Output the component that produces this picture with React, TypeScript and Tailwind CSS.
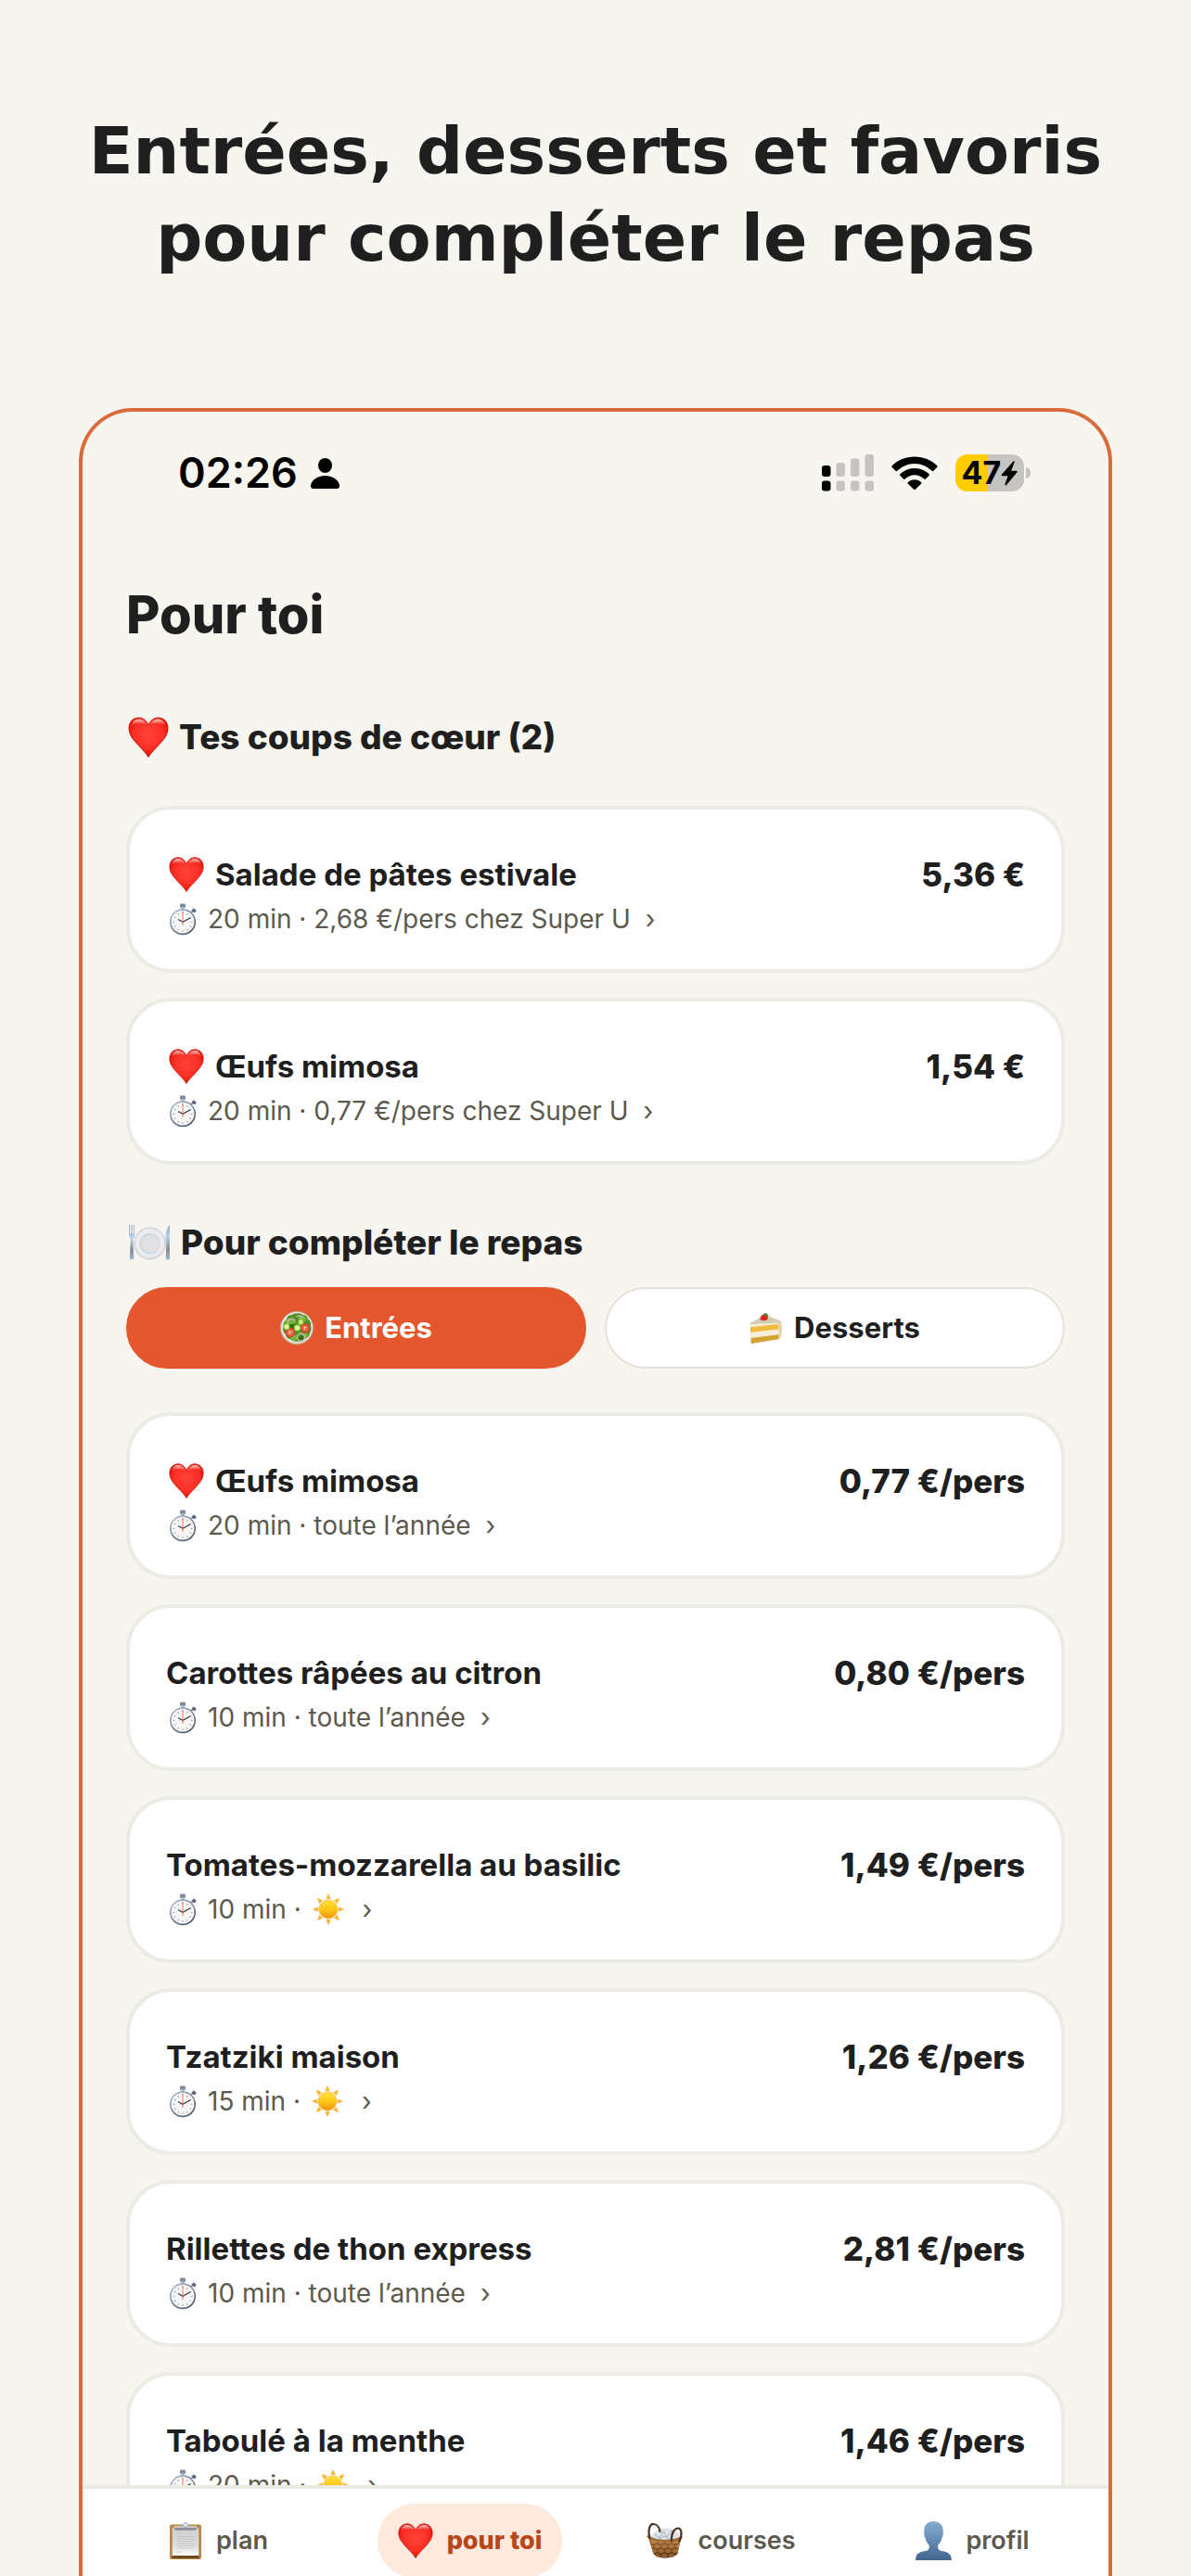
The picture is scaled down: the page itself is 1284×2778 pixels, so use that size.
import { useState } from "react";
import type { ReactNode } from "react";

type IconProps = { className?: string };

function Heart({ className = "" }: IconProps) {
  return (
    <svg viewBox="0 0 44 44" className={className} aria-hidden="true">
      <defs>
        <radialGradient id="heart-body" cx="0.5" cy="0.42" r="0.62">
          <stop offset="0" stopColor="#ff4338" />
          <stop offset="0.6" stopColor="#fb2f26" />
          <stop offset="0.88" stopColor="#dd1409" />
          <stop offset="1" stopColor="#b30a02" />
        </radialGradient>
        <linearGradient id="heart-shine" x1="0" y1="0" x2="0" y2="1">
          <stop offset="0" stopColor="#fff" stopOpacity="0.75" />
          <stop offset="1" stopColor="#ff8a80" stopOpacity="0" />
        </linearGradient>
      </defs>
      <path d="M22 43.500C20 39.500 15.500 35.500 11 30.500 5.500 24.500 1 19.500 1 12.200 1 5.500 5.600 1 11.500 1 16 1 20 4 22 9 24 4 28 1 32.500 1 38.400 1 43 5.500 43 12.200c0 7.300-4.500 12.300-10 18.300C28.500 35.500 24 39.500 22 43.500Z" fill="url(#heart-body)" stroke="#d3180d" strokeWidth="1" />
      <path d="M3 10.500C4 5.300 7.300 2.400 11.500 2.400c4 0 7.300 2.400 8.800 6.400C17 6.300 7 5.500 3 10.500Z" fill="url(#heart-shine)" />
      <path d="M41 10.500c-1-5.200-4.300-8.100-8.500-8.100-4 0-7.300 2.400-8.800 6.400C27 6.300 37 5.500 41 10.500Z" fill="url(#heart-shine)" />
    </svg>
  );
}

function Stopwatch({ className = "" }: IconProps) {
  const ticks = Array.from({ length: 12 }, (_, i) => i * 30);
  return (
    <svg viewBox="0 0 30 35" className={className} aria-hidden="true">
      <defs>
        <linearGradient id="watch-rim" x1="0" y1="0" x2="1" y2="1">
          <stop offset="0" stopColor="#a9bcd6" />
          <stop offset="0.5" stopColor="#6e7d95" />
          <stop offset="1" stopColor="#3d4554" />
        </linearGradient>
      </defs>
      <rect x="12" y="0.500" width="6" height="4.500" rx="1.200" fill="#7f8b9d" />
      <rect x="13.300" y="4" width="3.400" height="3" fill="#a9b6c8" />
      <path d="m24.300 9.800 2.200-2.200" stroke="#8794a8" strokeWidth="2" />
      <rect x="25" y="6" width="4.200" height="3.600" rx="1" transform="rotate(35 27 8)" fill="#5d6980" />
      <circle cx="15" cy="20.300" r="14" fill="url(#watch-rim)" />
      <circle cx="15" cy="20" r="12.600" fill="#d9dee6" />
      <circle cx="15" cy="20.300" r="12" fill="#f7f7f7" />
      {ticks.map((angle) => (
        <path key={angle} d="M15 9.800v1.700" stroke="#8a8a8a" strokeWidth="0.900" transform={`rotate(${angle} 15 20.300)`} />
      ))}
      <path d="M15 24V8.800" stroke="#f2785c" strokeWidth="1" />
      <path d="M10 17.500 15 20.300l8.300-4.600" stroke="#333a47" strokeWidth="1.200" fill="none" />
      <circle cx="15" cy="20.300" r="1.100" fill="#d9644a" />
    </svg>
  );
}

function Sun({ className = "" }: IconProps) {
  const rays = Array.from({ length: 8 }, (_, i) => i * 45);
  return (
    <svg viewBox="0 0 34 34" className={className} aria-hidden="true">
      <defs>
        <linearGradient id="sun-disc" x1="0" y1="0" x2="0" y2="1">
          <stop offset="0" stopColor="#ffe23a" />
          <stop offset="0.55" stopColor="#fcc419" />
          <stop offset="1" stopColor="#f28e0a" />
        </linearGradient>
      </defs>
      {rays.map((angle) => (
        <path key={angle} d="M17 0.500 19.300 5.800h-4.600Z" fill="#fbb829" stroke="#f0a020" strokeWidth="0.400" transform={`rotate(${angle} 17 17)`} />
      ))}
      <circle cx="17" cy="17" r="10" fill="url(#sun-disc)" stroke="#f0a31a" strokeWidth="0.500" />
    </svg>
  );
}

function Plate({ className = "" }: IconProps) {
  return (
    <svg viewBox="0 0 46 40" className={className} aria-hidden="true">
      <defs>
        <linearGradient id="cutlery" x1="0" y1="0" x2="0" y2="1">
          <stop offset="0" stopColor="#a2a9b1" />
          <stop offset="0.35" stopColor="#b4d0ea" />
          <stop offset="0.7" stopColor="#858b92" />
          <stop offset="1" stopColor="#a0bad6" />
        </linearGradient>
      </defs>
      <circle cx="23.500" cy="21" r="17" fill="#dcdee3" stroke="#c3c6ce" strokeWidth="0.800" />
      <circle cx="23.500" cy="20.500" r="15.600" fill="#ececef" />
      <circle cx="23.500" cy="21" r="11" fill="#cdd4de" />
      <circle cx="23.800" cy="21.500" r="9.800" fill="#e1e1e2" />
      <path d="M15 27a11 11 0 0 0 16 2" fill="none" stroke="#c3daf3" strokeWidth="1.600" />
      <path d="M1 1h1.100v9h1.300V1h1.200v9h1.300V1H7v11c0 2-1 3.200-2 3.800l1.300 20.500c.1 3-4.600 3-4.500 0L3 15.800C2 15.200 1 14 1 12Z" fill="url(#cutlery)" />
      <path d="M45 .5v36.300c0 2.600-4.300 2.600-4.300 0l.6-16.800c-1.300-3-1.300-14 3.700-19.500Z" fill="url(#cutlery)" />
    </svg>
  );
}

function Salad({ className = "" }: IconProps) {
  return (
    <svg viewBox="0 0 36 36" className={className} aria-hidden="true">
      <circle cx="18" cy="18" r="17.800" fill="#c9c9bd" />
      <circle cx="18" cy="17.600" r="16.600" fill="#e6e6df" />
      <path d="M18 2.500c3-1 5 .5 7 1.500 3 0 4 2 5 4.500 3 2 3.500 5 3 7.500 1 3 .5 5-1 7.500-.5 4-3 5-5 6-2 3-5 3.500-8 3-3 1-6-.5-7.500-2-4-1-5-3-6-6-2.500-2.500-3-5-2-7.500-.5-4 1-6 3-7.500C8 5 10 4 13 4c1.500-1.300 3-1.700 5-1.500Z" fill="#4f9226" />
      <path d="M6 10c3-4 7-2 9 0s0 6-4 5-6 2-5-5ZM21 5c3-2 7 1 7 4s-5 3-7 1-2-4 0-5ZM13 26c3-2 5 0 5 3s-3 4-5 2-2-4 0-5ZM26 24c2-1 4 0 4 2s-2 3-4 1-2-2 0-3Z" fill="#76b83a" />
      <path d="M14 14c3 1 3 5 0 6s-6-2-6-3 3-4 6-3ZM24 27c2 1 1 5-1 5s-3-2-3-3 2-3 4-2Z" fill="#2f6f18" />
      <path d="M8.500 12.500c0-5 7-6 7.500-1M17.500 6c2-2 6-1 6.500 1.500" fill="none" stroke="#dcaec0" strokeWidth="1.300" />
      <circle cx="22.500" cy="28" r="4" fill="none" stroke="#dcb4b4" strokeWidth="1.300" />
      <circle cx="10.800" cy="23" r="5.300" fill="#d4432c" />
      <circle cx="10.800" cy="23" r="3.700" fill="#e86a4c" />
      <circle cx="27" cy="18.200" r="5.300" fill="#cf3f29" />
      <circle cx="27" cy="18.200" r="3.700" fill="#e56549" />
      <path d="m9 23 3-1.500M10 24.500l1.500-3M25.300 18.200l3.200-1M26.500 20v-3.500" stroke="#ffd9a0" strokeWidth="0.900" />
      <circle cx="7" cy="16.700" r="3.300" fill="#a5d93f" />
      <circle cx="7" cy="16.700" r="2.200" fill="#e0f5a8" />
      <circle cx="18.500" cy="18" r="3.600" fill="#a5d93f" />
      <circle cx="18.500" cy="18" r="2.400" fill="#e0f5a8" />
      <circle cx="22.300" cy="11.700" r="3" fill="#a5d93f" />
      <circle cx="22.300" cy="11.700" r="1.900" fill="#d3ee8d" />
    </svg>
  );
}

function Cake({ className = "" }: IconProps) {
  return (
    <svg viewBox="0 0 36 36" className={className} aria-hidden="true">
      <path d="M.5 13 17 6l16 5c2 2 2.300 14 .2 18.500L2 35Z" fill="#efe4c4" />
      <path d="M.5 13 17 4l13 5c3 1.200 4.500 2 4.800 4L1 15Z" fill="#d2cdb4" />
      <path d="M.8 14 32 12.500v2L1 17Z" fill="#f5edd5" />
      <path d="M1 17.200 31.500 14v5.500L1.200 23Z" fill="#efbb3d" />
      <path d="M1.200 23 31.500 19.500V25.500L1.400 29Z" fill="#f6eeda" />
      <path d="M1.400 29 31.500 25.300v4.900L1.700 35Z" fill="#d3a334" />
      <path d="M31.500 13c3-.5 3.800 1 3.600 6-.1 5-.9 10.500-3.600 11.200Z" fill="#e3d5ac" />
      <path d="M11.500 8.500c0-3.500 3-5.500 5.500-5.500 2 .5 3 4 2.500 6-2 1.800-7.500 1.500-8-.5Z" fill="#d92b23" />
      <path d="M15.500 2.500 18 2l2.300 2.500-.8 2.500-2.200-1.500Z" fill="#48842d" />
    </svg>
  );
}

function Clipboard({ className = "" }: IconProps) {
  return (
    <svg viewBox="0 0 36 40" className={className} aria-hidden="true">
      <defs>
        <linearGradient id="sheet" x1="0" y1="0" x2="0" y2="1">
          <stop offset="0" stopColor="#cfcfcf" />
          <stop offset="0.65" stopColor="#dedede" />
          <stop offset="1" stopColor="#fbfbfb" />
        </linearGradient>
      </defs>
      <rect x="1" y="2.500" width="34" height="37.500" rx="2" fill="#b98a45" />
      <rect x="3.500" y="36" width="29" height="3" fill="#6f4c1e" />
      <rect x="3.800" y="6" width="28.400" height="30" fill="url(#sheet)" />
      <path d="M8.500 11.500h5M8.500 15.500h20M8.500 18h21M8.500 20.500h19M8.500 23h21M8.500 25.500h20M8.500 28h18M8.500 32h5" stroke="#c2c2c2" strokeWidth="0.800" />
      <path d="M6 5.200h24v2.300c0 .8-.6 1.200-1.400 1.200H7.400C6.600 8.700 6 8.300 6 7.500Z" fill="#8d9196" />
      <path d="M6 4.200h24v1.600H6Z" fill="#d5d9de" />
      <path d="M14.500 4.200c0-4.800 7-4.800 7 0Z" fill="#c3dbf4" stroke="#93a9c2" strokeWidth="0.700" />
      <circle cx="18" cy="2.800" r="1" fill="#fff" />
    </svg>
  );
}

function Basket({ className = "" }: IconProps) {
  return (
    <svg viewBox="0 0 40 40" className={className} aria-hidden="true">
      <defs>
        <clipPath id="basket-shape">
          <path d="M2 17h35l-3.500 17c-5 6-22 6-26 0Z" />
        </clipPath>
        <linearGradient id="basket-body" x1="0" y1="0" x2="0" y2="1">
          <stop offset="0" stopColor="#a86d36" />
          <stop offset="1" stopColor="#4f2e12" />
        </linearGradient>
        <linearGradient id="basket-weave" gradientUnits="userSpaceOnUse" x1="0" y1="16" x2="0" y2="40">
          <stop offset="0" stopColor="#cb9153" />
          <stop offset="1" stopColor="#855527" />
        </linearGradient>
      </defs>
      <path d="M5 15c2-5 9-8 14-8.500s12 1 16 6l1 7c-8 4-23 4-31 0Z" fill="#dfe4ea" />
      <path d="m9 13 5 4 4-7 4 6 5-7 2 7M13 19l6-4 7 4" stroke="#b4bdc9" strokeWidth="1.200" fill="none" />
      <g clipPath="url(#basket-shape)">
        <path d="M0 16c8 6 32 6 40 0v24H0Z" fill="url(#basket-body)" />
        {[20, 25, 30, 35].map((y, row) =>
          [0, 1, 2, 3, 4, 5].map((col) => (
            <ellipse key={`${y}-${col}`} cx={col * 7.6 + (row % 2 ? 4 : 0.5)} cy={y + 1} rx="3.300" ry="2.100" fill="url(#basket-weave)" />
          )),
        )}
      </g>
      <path d="M1.800 15.500c7 5.500 28 6.500 35.500 1" fill="none" stroke="#a06c38" strokeWidth="2.800" strokeLinecap="round" />
      <path d="M3.500 17C1 7 4 1.500 8 2c3.500.3 6 4 6.500 8M27 20c-.5-9 3.500-13.500 7-13.500s5 6 1.500 14" fill="none" stroke="#4c3523" strokeWidth="2.200" strokeLinecap="round" />
    </svg>
  );
}

function Bust({ className = "" }: IconProps) {
  return (
    <svg viewBox="0 0 39 42" className={className} aria-hidden="true">
      <defs>
        <linearGradient id="bust" x1="0" y1="0" x2="0" y2="1">
          <stop offset="0" stopColor="#85aed0" />
          <stop offset="1" stopColor="#41658f" />
        </linearGradient>
      </defs>
      <path d="M19.500 0c6 0 10 3.800 10.200 9.500 0 2 .2 3 0 5-.2 1.800-.8 2.400-1.300 3.700-.9 3.300-1.800 5-4 7.300-.6 4 .3 5.800 3.500 6.500C33.500 33 38.500 33.500 39 42H0c.5-8.500 5.500-9 11.100-10 3.200-.7 4.100-2.500 3.500-6.500-2.200-2.300-3.100-4-4-7.300-.5-1.300-1.100-1.900-1.300-3.700-.2-2 0-3 0-5C9.500 3.800 13.500 0 19.500 0Z" fill="url(#bust)" />
    </svg>
  );
}

function StatusBar() {
  return (
    <div className="mt-10 flex h-[52px] items-center justify-between pl-[103px] pr-[84px] text-black">
      <div className="flex items-center gap-[14px]">
        <span className="text-[45px] font-semibold leading-[52px]">02:26</span>
        <svg viewBox="0 0 31 33" className="w-[31px]" aria-hidden="true">
          <ellipse cx="15.500" cy="8" rx="7.500" ry="8" />
          <path d="M3 33c-2 0-3-1-3-3 0-5.500 7-11 15.500-11S31 24.500 31 30c0 2-1 3-3 3Z" />
        </svg>
      </div>
      <div className="flex items-center gap-[19px]">
        <svg viewBox="0 0 56 40" className="w-14" aria-hidden="true">
          <g fill="#c5c4c0">
            <rect x="15.500" y="9" width="9.500" height="15" rx="3" />
            <rect x="31" y="4.500" width="9.500" height="19.500" rx="3" />
            <rect x="46.500" y="0" width="9.500" height="24" rx="3" />
            <rect x="15.500" y="28.500" width="9.500" height="11" rx="3" />
            <rect x="31" y="28.500" width="9.500" height="11" rx="3" />
            <rect x="46.500" y="28.500" width="9.500" height="11" rx="3" />
          </g>
          <rect y="12" width="9.500" height="12" rx="3" />
          <rect y="28.500" width="9.500" height="11" rx="3" />
        </svg>
        <svg viewBox="0 0 50 36" className="w-[50px]" aria-hidden="true">
          <path d="M25 .5C15.500.5 7 4 .7 10.200c-.6.600-.6 1.100-.1 1.600l4 4c.5.500 1 .5 1.600 0C11.300 11 17.500 7.900 25 7.900s13.700 3.100 18.800 7.900c.6.500 1.100.5 1.600 0l4-4c.5-.5.5-1-.1-1.600C43 4 34.500.5 25 .5Z" />
          <path d="M25 13c-6 0-11.500 2.300-15.600 6.200-.6.600-.6 1.100-.1 1.600l3.800 3.800c.5.500 1 .5 1.600 0C17.500 21.800 21 20.200 25 20.200s7.500 1.600 10.300 4.400c.6.500 1.100.5 1.600 0l3.800-3.800c.5-.5.5-1-.1-1.600C36.500 15.300 31 13 25 13Z" />
          <path d="M25 25.300c-2.900 0-5.200 1-7 2.600-.7.600-.7 1.200-.1 1.800l5.900 5.700c.8.800 1.600.8 2.400 0l5.900-5.700c.6-.6.600-1.200-.1-1.800-1.800-1.600-4.100-2.600-7-2.600Z" />
        </svg>
        <div className="flex items-center gap-0.5">
          <div className="flex h-10 w-[74px] items-center justify-center rounded-[13px] bg-linear-to-r from-[#ffcc00] from-47% to-[#c5c4c0] to-47%">
            <span className="text-[34px] font-bold leading-10">47</span>
            <svg viewBox="0 0 18 27" className="w-[18px]" aria-hidden="true">
              <path d="M13.200.8 1 14.600c-.7.900-.4 1.600.6 1.600h6L4.500 25c-.4 1.400.6 1.900 1.500.9l11.300-13.500c.7-.9.400-1.600-.6-1.600h-5.600l3.600-9.200c.3-1.100-.7-1.700-1.500-.8Z" />
            </svg>
          </div>
          <div className="h-3 w-[5px] rounded-r-full bg-[#c5c4c0]" />
        </div>
      </div>
    </div>
  );
}

type Dish = {
  name: string;
  price: string;
  minutes: number;
  note?: string;
  favorite?: boolean;
};

const favorites: Dish[] = [
  { name: "Salade de pâtes estivale", price: "5,36 €", minutes: 20, note: "2,68 €/pers chez Super U", favorite: true },
  { name: "Œufs mimosa", price: "1,54 €", minutes: 20, note: "0,77 €/pers chez Super U", favorite: true },
];

const starters: Dish[] = [
  { name: "Œufs mimosa", price: "0,77 €/pers", minutes: 20, note: "toute l’année", favorite: true },
  { name: "Carottes râpées au citron", price: "0,80 €/pers", minutes: 10, note: "toute l’année" },
  { name: "Tomates-mozzarella au basilic", price: "1,49 €/pers", minutes: 10 },
  { name: "Tzatziki maison", price: "1,26 €/pers", minutes: 15 },
  { name: "Rillettes de thon express", price: "2,81 €/pers", minutes: 10, note: "toute l’année" },
  { name: "Taboulé à la menthe", price: "1,46 €/pers", minutes: 20 },
];

function DishCard({ dish }: { dish: Dish }) {
  return (
    <li>
      <a href="#" className="block rounded-[48px] border-4 border-[#ecebe4] bg-white px-[39px] pb-9 pt-[50px]">
        <div className="flex items-start justify-between">
          <h3 className="flex items-center gap-3 text-[33px] font-bold leading-10">
            {dish.favorite && <Heart className="ml-[3px] w-[38px]" />}
            {dish.name}
          </h3>
          <span className="text-[35px] font-extrabold leading-10">{dish.price}</span>
        </div>
        <p className="mt-2.5 flex items-center text-[28px] leading-9 text-[#5c594e]">
          <Stopwatch className="ml-[3px] mr-3 w-[30px]" />
          <span>{dish.minutes} min ·&nbsp;</span>
          {dish.note ? <span>{dish.note}</span> : <Sun className="ml-1 w-[34px]" />}
          <span className={dish.note ? "ml-4" : "ml-5"}>›</span>
        </p>
      </a>
    </li>
  );
}

function SectionTitle({ icon, children }: { icon: ReactNode; children: ReactNode }) {
  return (
    <h2 className="flex items-center gap-[11px] text-[37px] font-extrabold leading-[44px]">
      {icon}
      {children}
    </h2>
  );
}

function Tab({ active, onClick, children }: { active: boolean; onClick: () => void; children: ReactNode }) {
  const tone = active ? "border-[#e4572e] bg-[#e4572e] text-white" : "border-[#e6e0d8] bg-white";
  return (
    <button
      type="button"
      role="tab"
      aria-selected={active}
      onClick={onClick}
      className={`flex h-[88px] items-center justify-center gap-3 rounded-full border-2 text-[31px] font-bold ${tone}`}
    >
      {children}
    </button>
  );
}

const navItems = [
  { label: "plan", icon: <Clipboard className="w-9" />, active: false },
  { label: "pour toi", icon: <Heart className="w-[38px]" />, active: true },
  { label: "courses", icon: <Basket className="w-10" />, active: false },
  { label: "profil", icon: <Bust className="w-[39px]" />, active: false },
];

export default function App() {
  const [tab, setTab] = useState("starters");
  return (
    <div className="flex h-screen flex-col overflow-hidden bg-[#f6f5ef] px-[85px] text-[#1f1f1f]">
      <p className="-mx-10 shrink-0 pt-[116px] text-center font-['DejaVu_Sans',sans-serif] text-[70px] font-bold leading-[94px]">
        Entrées, desserts et favoris
        <br />
        pour compléter le repas
      </p>

      <div className="mt-[136px] flex min-h-0 flex-1 flex-col overflow-hidden rounded-t-[58px] border-4 border-b-0 border-[#d96a3b] font-[Inter,sans-serif]">
        <StatusBar />

        <main className="min-h-0 flex-1 overflow-hidden px-[47px]">
          <h1 className="mt-[93px] text-[56px] font-extrabold leading-[68px]">Pour toi</h1>

          <section className="mt-[76px]">
            <SectionTitle icon={<Heart className="ml-0.5 w-[44px]" />}>Tes coups de cœur (2)</SectionTitle>
            <ul className="mt-[52px] flex flex-col gap-[27px]">
              {favorites.map((dish) => (
                <DishCard key={dish.name} dish={dish} />
              ))}
            </ul>
          </section>

          <section className="mt-[62px]">
            <SectionTitle icon={<Plate className="ml-0.5 w-[46px]" />}>Pour compléter le repas</SectionTitle>
            <div role="tablist" aria-label="Type de plat" className="mt-[26px] grid grid-cols-2 gap-5">
              <Tab active={tab === "starters"} onClick={() => setTab("starters")}>
                <Salad className="w-9" />
                Entrées
              </Tab>
              <Tab active={tab === "desserts"} onClick={() => setTab("desserts")}>
                <Cake className="w-9" />
                Desserts
              </Tab>
            </div>
            <ul className="mt-[47px] flex flex-col gap-[27px]">
              {starters.map((dish) => (
                <DishCard key={dish.name} dish={dish} />
              ))}
            </ul>
          </section>
        </main>

        <nav className="grid h-[98px] shrink-0 grid-cols-4 overflow-hidden border-t-4 border-[#ecebe4] bg-white px-[11px] pt-4">
          {navItems.map((item) => (
            <a
              key={item.label}
              href="#"
              aria-current={item.active ? "page" : undefined}
              className={`flex h-20 items-center gap-[15px] justify-self-center rounded-full px-[22px] text-[27px] ${
                item.active ? "bg-[#fdeadc] font-extrabold text-[#b8451c]" : "font-semibold text-[#5c594e]"
              }`}
            >
              {item.icon}
              {item.label}
            </a>
          ))}
        </nav>
      </div>
    </div>
  );
}
